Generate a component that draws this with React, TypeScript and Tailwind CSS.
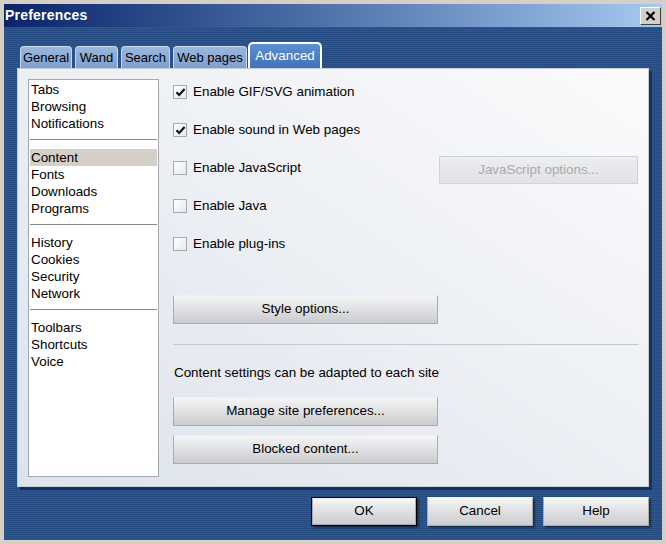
import React from "react";

const font = "font-['Liberation_Sans',Arial,sans-serif]";

function Check({ on }: { on: boolean }) {
  return (
    <span className="w-[14px] h-[14px] border border-[#a4aab1] bg-linear-to-br from-white to-[#e6e8ec] flex items-center justify-center">
      {on && (
        <svg width="11" height="11" viewBox="0 0 11 11">
          <path d="M1.5 5.2 L4.2 8 L9.6 2" fill="none" stroke="#111" strokeWidth="2.1" />
        </svg>
      )}
    </span>
  );
}

function Btn({ label, className = "", disabled = false }: { label: string; className?: string; disabled?: boolean }) {
  const look = disabled
    ? "border-[#cfd2d6] bg-linear-to-b from-[#eceef0] to-[#e0e2e5] text-[#a9abae]"
    : "border-[#a9abaf] border-t-[#eef0f2] bg-linear-to-b from-[#f5f5f6] to-[#cbcccf] text-black";
  return (
    <div className={`flex items-center justify-center border text-[13.4px] ${look} ${className}`}>{label}</div>
  );
}

export default function App() {
  const rows = [
    { label: "Enable GIF/SVG animation", on: true },
    { label: "Enable sound in Web pages", on: true },
    { label: "Enable JavaScript", on: false, js: true },
    { label: "Enable Java", on: false },
    { label: "Enable plug-ins", on: false },
  ];
  const groups = [
    ["Tabs", "Browsing", "Notifications"],
    ["Content", "Fonts", "Downloads", "Programs"],
    ["History", "Cookies", "Security", "Network"],
    ["Toolbars", "Shortcuts", "Voice"],
  ];
  const tabs = [
    { name: "General", w: "w-[52px]" },
    { name: "Wand", w: "w-[43px]" },
    { name: "Search", w: "w-[49px]" },
    { name: "Web pages", w: "w-[74px]" },
  ];

  return (
    <div className={`w-[666px] h-[544px] bg-[#d4d0c8] p-[4px] flex flex-col ${font} text-black`}>
      {/* title bar */}
      <div className="h-[23px] flex items-center justify-between bg-linear-to-r from-[#0a246a] to-[#a6caf0] pl-[1px] pr-[1px]">
        <span className="text-white font-bold text-[14px] tracking-[0.2px]">Preferences</span>
        <div className="w-[21px] h-[18px] bg-[#d4d0c8] border border-t-white border-l-white border-r-[#404040] border-b-[#404040] flex items-center justify-center">
          <svg width="11" height="10" viewBox="0 0 11 10">
            <path d="M1.5 1 L9.5 9 M9.5 1 L1.5 9" stroke="#000" strokeWidth="2.2" />
          </svg>
        </div>
      </div>

      {/* body */}
      <div className="flex-1 flex flex-col pt-[15px] px-[13px] bg-[repeating-linear-gradient(180deg,#2d5891_0px,#2d5891_1px,#254c82_1px,#254c82_2px)]">
        <div className="flex items-end h-[26px] pl-[3px] gap-[3px]">
          {tabs.map((t) => (
            <div
              key={t.name}
              className={`${t.w} h-[22px] rounded-t-[4px] border border-b-0 border-[#c9d7ea] bg-linear-to-b from-[#9bb7dc] to-[#7f9fcd] text-[13px] flex items-center justify-center`}
            >
              {t.name}
            </div>
          ))}
          <div className="w-[74px] h-[26px] -ml-[2px] rounded-t-[5px] border-2 border-b-0 border-white bg-linear-to-b from-[#5d8fd0] to-[#3f72b8] text-white text-[13.4px] flex items-start justify-center pt-[2px]">
            Advanced
          </div>
        </div>

        {/* panel */}
        <div className="h-[419px] flex gap-[14px] p-[10px] border border-[#c6ccd4] bg-linear-to-bl from-[#fbfbfc] to-[#dde3ec] shadow-[3px_3px_0_rgba(10,25,55,0.55)]">
          <div className="w-[131px] h-[398px] bg-white border border-[#a3a9b0] pt-[1px] flex flex-col text-[13.4px]">
            {groups.map((g, gi) => (
              <div key={gi} className="flex flex-col">
                {gi > 0 && (
                  <div className="h-[17px] pt-[7px] mx-[1px]">
                    <div className="h-px bg-[#8a8a8a]" />
                  </div>
                )}
                {g.map((item) => (
                  <div
                    key={item}
                    className={`h-[17px] leading-[17px] mx-[1px] pl-[1px] ${item === "Content" ? "bg-[#d4d0c8]" : ""}`}
                  >
                    {item}
                  </div>
                ))}
              </div>
            ))}
          </div>

          <div className="flex-1 flex flex-col text-[13.4px]">
            <div className="flex flex-col gap-[10px]">
              {rows.map((r) => (
                <div key={r.label} className="h-[28px] flex items-center justify-between">
                  <div className="flex items-center gap-[6px] -mt-[1px]">
                    <Check on={r.on} />
                    <span>{r.label}</span>
                  </div>
                  {r.js && <Btn label="JavaScript options..." disabled className="w-[199px] h-[28px] mt-[2px]" />}
                </div>
              ))}
            </div>
            <Btn label="Style options..." className="w-[265px] h-[29px] mt-[36px]" />
            <div className="h-px bg-[#c3c8cf] mt-[20px] mr-[-1px]" />
            <div className="h-[17px] leading-[17px] mt-[19px] pl-[1px]">Content settings can be adapted to each site</div>
            <Btn label="Manage site preferences..." className="w-[265px] h-[29px] mt-[16px]" />
            <Btn label="Blocked content..." className="w-[265px] h-[29px] mt-[9px]" />
          </div>
        </div>

        {/* dialog buttons */}
        <div className="flex justify-end gap-[10px] mt-[10px]">
          <div className="w-[106px] h-[29px] border border-black shadow-[2px_2px_2px_rgba(0,0,0,0.45)]">
            <Btn label="OK" className="w-full h-full" />
          </div>
          <Btn label="Cancel" className="w-[106px] h-[29px] shadow-[2px_2px_2px_rgba(0,0,0,0.45)]" />
          <Btn label="Help" className="w-[106px] h-[29px] shadow-[2px_2px_2px_rgba(0,0,0,0.45)]" />
        </div>
      </div>
    </div>
  );
}
